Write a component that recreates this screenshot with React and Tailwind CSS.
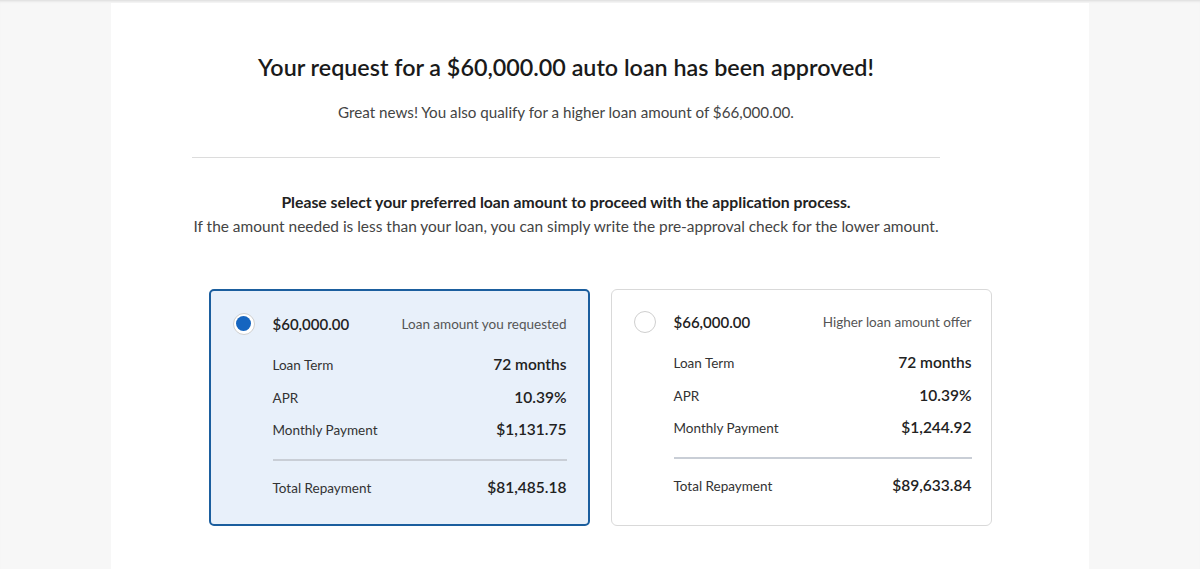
import React from 'react';

const OFFERS = [
  {
    amount: '$60,000.00',
    note: 'Loan amount you requested',
    term: '72 months',
    apr: '10.39%',
    monthly: '$1,131.75',
    total: '$81,485.18',
    selected: true,
  },
  {
    amount: '$66,000.00',
    note: 'Higher loan amount offer',
    term: '72 months',
    apr: '10.39%',
    monthly: '$1,244.92',
    total: '$89,633.84',
    selected: false,
  },
];

function Radio({ checked }) {
  return (
    <span className="w-[22px] h-[22px] rounded-full border border-[#cfcfcf] bg-white flex items-center justify-center shrink-0">
      {checked && <span className="w-[15px] h-[15px] rounded-full bg-[#1565c0]" />}
    </span>
  );
}

function Row({ label, value, className = '' }) {
  return (
    <div className={`h-[22px] flex justify-between items-center ${className}`}>
      <span className="text-[13.5px] text-[#333]">{label}</span>
      <span className="text-[15.5px] font-semibold text-[#222]">{value}</span>
    </div>
  );
}

function OfferCard({ offer }) {
  const box = offer.selected
    ? 'border-2 border-[#1b5e9e] bg-[#e8f0fa] rounded-[5px] pt-[22px] pl-[22px] pr-[21px]'
    : 'border border-[#d9d9d9] bg-white rounded-[6px] pt-[21px] pl-[22px] pr-[19px]';
  return (
    <div className={`w-[381px] h-[237px] ${box}`}>
      <div className="flex items-center h-[22px]">
        <div className="w-[40px] shrink-0">
          <Radio checked={offer.selected} />
        </div>
        <div className="flex-1 flex justify-between items-center">
          <span className="text-[15px] font-semibold text-[#222]">{offer.amount}</span>
          <span className="text-[13.5px] text-[#555]">{offer.note}</span>
        </div>
      </div>
      <div className="pl-[40px] flex flex-col">
        <Row className="mt-[19px]" label="Loan Term" value={offer.term} />
        <Row className="mt-[11px]" label="APR" value={offer.apr} />
        <Row className="mt-[10px]" label="Monthly Payment" value={offer.monthly} />
        <div className="h-[2px] bg-[#c9ced6] mt-[18px]" />
        <Row className="mt-[16px]" label="Total Repayment" value={offer.total} />
      </div>
    </div>
  );
}

export default function App() {
  return (
    <div
      className="min-h-[569px] bg-[#f7f7f7] pt-[3px] shadow-[inset_0_3px_3px_-2px_rgba(0,0,0,0.12)]"
      style={{ fontFamily: 'Lato, "Noto Sans", sans-serif' }}
    >
      <div className="mx-auto w-[978px] min-h-[566px] bg-white">
        <div className="ml-[81px] w-[748px] flex flex-col items-center text-center pt-[49px]">
          <h1 className="text-[23.3px] font-semibold text-[#1a1a1a] leading-[30px] whitespace-nowrap">
            Your request for a $60,000.00 auto loan has been approved!
          </h1>
          <p className="mt-[19px] text-[15.2px] text-[#444] whitespace-nowrap">
            Great news! You also qualify for a higher loan amount of $66,000.00.
          </p>
          <div className="mt-[33px] h-px w-full bg-[#dcdcdc]" />
          <p className="mt-[33px] text-[15.75px] font-bold text-[#222] leading-[22px] whitespace-nowrap">
            Please select your preferred loan amount to proceed with the application process.
          </p>
          <p className="text-[15.45px] text-[#444] leading-[26px] whitespace-nowrap">
            If the amount needed is less than your loan, you can simply write the pre-approval check for the lower amount.
          </p>
        </div>
        <div className="mt-[50px] flex justify-center gap-[21px]">
          {OFFERS.map((o) => (
            <OfferCard key={o.amount} offer={o} />
          ))}
        </div>
      </div>
    </div>
  );
}
